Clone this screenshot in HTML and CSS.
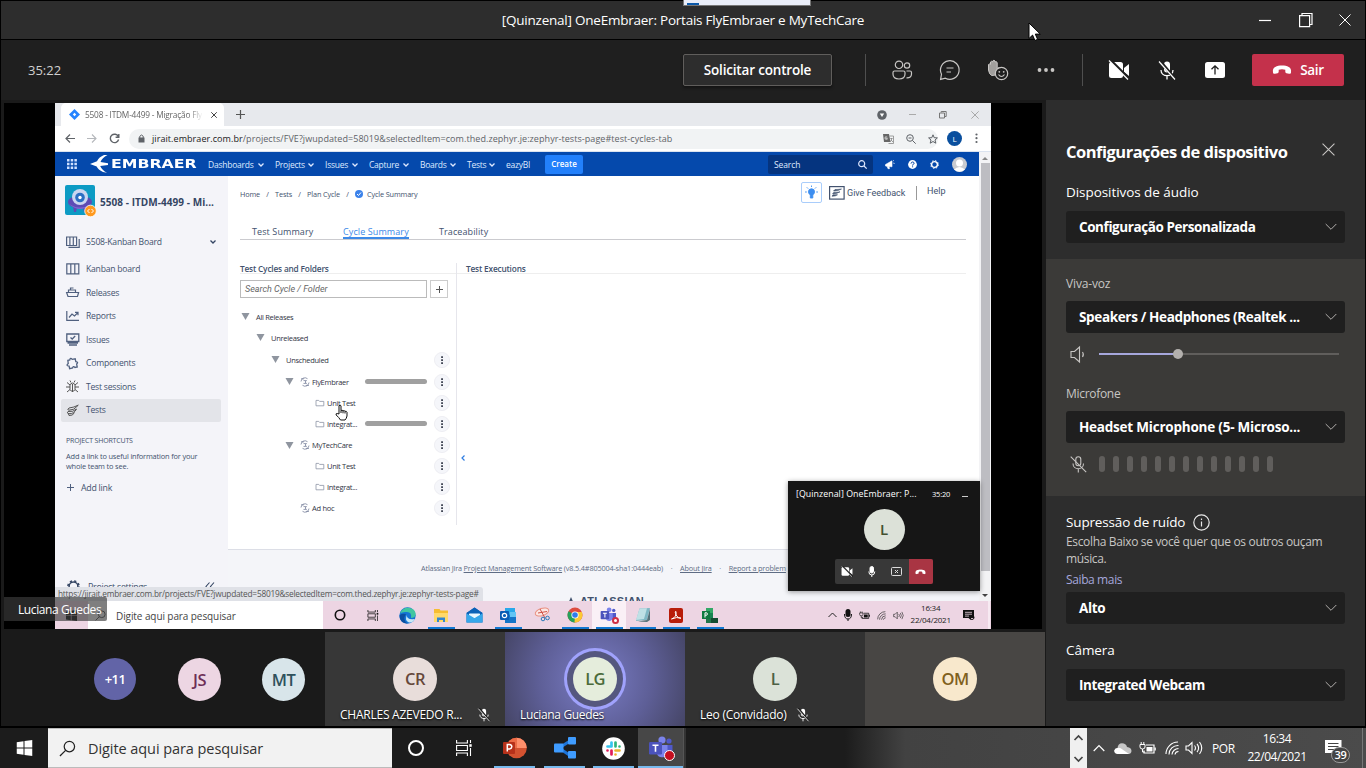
FILE: index.html
```html
<!DOCTYPE html>
<html lang="pt-BR">
<head>
<meta charset="utf-8">
<title>[Quinzenal] OneEmbraer: Portais FlyEmbraer e MyTechCare</title>
<link rel="stylesheet" href="styles.css">
</head>
<body>
<svg class="defs" width="0" height="0">
  <symbol id="chev" viewBox="0 0 12 8"><path d="M.7 1 6 6.3 11.300 1" fill="none" stroke="currentColor" stroke-width="1"/></symbol>
  <symbol id="x" viewBox="0 0 12 12"><path d="M.5.5l11 11M11.500.5l-11 11" fill="none" stroke="currentColor"/></symbol>
  <symbol id="mic-off" viewBox="0 0 20 20"><rect x="7" y="1" width="6" height="11" rx="3" fill="currentColor"/><path d="M4 9.500c0 7.500 12 7.500 12 0M10 15.500V19" fill="none" stroke="currentColor" stroke-width="1.300"/><path d="M3 .5 18.500 19" stroke="#1f1f1f" stroke-width="3"/><path d="M2 1l16 18" stroke="currentColor" stroke-width="1.200"/></symbol>
  <symbol id="hang" viewBox="0 0 20 10"><path d="M1 7.500C0 2 5 .5 10 .5S20 2 19 7.500c-.2 1.300-1 1.500-2 1.300l-2.500-.6c-.9-.2-1.200-.7-1.200-1.600V4.800c-2-.8-4.600-.8-6.600 0v1.800c0 .9-.3 1.400-1.200 1.600L3 8.800c-1 .2-1.800 0-2-1.300z" fill="currentColor"/></symbol>
  <symbol id="cam-off" viewBox="0 0 22 20"><rect x="1" y="2" width="14" height="16" rx="2.500" fill="currentColor"/><path d="M16 8l5-4v12l-5-4z" fill="currentColor"/><path d="M2-.5 21.500 19" stroke="#1f1f1f" stroke-width="2.500"/><path d="M1 .5 20 19.500" stroke="currentColor" stroke-width="1.200"/></symbol>
  <symbol id="tri" viewBox="0 0 8 7"><path d="M0 0h8L4 7z" fill="#8f959f"/></symbol>
  <symbol id="cyc" viewBox="0 0 10 10"><path d="M1 4.500A4 4 0 0 1 7.500 1.700M9 5.500A4 4 0 0 1 2.500 8.300M1 1.800h3M6 8.400h3M3.500 3.600h3L5 5l1.500 1.400h-3" fill="none" stroke="#77809a" stroke-width=".8"/></symbol>
  <symbol id="fold" viewBox="0 0 10 8"><path d="M1 6.800V1.400h2.700l.9 1h4.200v4.400z" fill="none" stroke="#8d94a5" stroke-width=".8"/></symbol>
  <symbol id="dots" viewBox="0 0 16 16"><circle cx="8" cy="8" r="7.600" fill="#f5f6fa" stroke="#e8e8ee" stroke-width=".7"/><path d="M7.200 4.200h1.700v1.700H7.200zM7.200 7.200h1.700v1.700H7.200zM7.200 10.200h1.700v1.700H7.200z" fill="#2f3544"/></symbol>
  <symbol id="lens" viewBox="0 0 18 18"><circle cx="11" cy="7" r="5.500" fill="none" stroke="currentColor" stroke-width="1.300"/><path d="M7 11l-6 6" stroke="currentColor" stroke-width="1.300"/></symbol>
  <symbol id="win" viewBox="0 0 16 16"><path d="M0 2.200 7 1.200v6.300H0zM8 1.100 16 0v7.500H8zM0 8.500h7v6.300l-7-1zM8 8.500h8V16l-8-1.100z" fill="currentColor"/></symbol>
  <symbol id="tview" viewBox="0 0 16 16"><path d="M.6 0v3h10.800V0M.6 16v-3h10.800v3M.6 5.500h10.800v5H.6zM14.500 0v3M14.500 8v8" fill="none" stroke="currentColor" stroke-width="1.100"/><path d="M13.300 4.200h2.400v2.600h-2.400z" fill="currentColor"/></symbol>
  <symbol id="wifi" viewBox="0 0 14 14"><path d="M1 13A12 12 0 0 1 13 1M4 13.500A9 9 0 0 1 13.500 4.500M7 13.500a6.500 6.500 0 0 1 6.500-6M10 13.500a3.500 3.500 0 0 1 3.500-3" fill="none" stroke="currentColor" stroke-width="1.100"/></symbol>
  <symbol id="vol" viewBox="0 0 18 14"><path d="M1 5v4h2.500L7 12.500v-11L3.500 5zM9.500 4.500q2 2.500 0 5M12 2.800q3.200 4.200 0 8.400M14.500 1q4.500 6 0 12" fill="none" stroke="currentColor" stroke-width="1.100"/></symbol>
  <symbol id="bat" viewBox="0 0 17 13"><path d="M7 3h8v8H5V8.500" fill="none" stroke="currentColor" stroke-width="1.200"/><path d="M7.500 5h6v4.500h-6zM15.500 5.500h1.300v3h-1.300z" fill="currentColor"/><path d="M1 2.500h5V5q0 2-2.500 2T1 5zM2.200 2.500V0M4.800 2.500V0M3.500 7v3h2" fill="none" stroke="currentColor"/></symbol>
  <symbol id="teams" viewBox="0 0 26 24"><circle cx="14" cy="4" r="3.600" fill="#7b83eb"/><circle cx="21" cy="5" r="2.600" fill="#5059c9"/><path d="M17 9h7.500v6.500a4 4 0 0 1-7.500 2z" fill="#5059c9"/><path d="M9 9h10.500v7a5.500 5.500 0 0 1-10.500 2z" fill="#7b83eb"/><rect x="1" y="6" width="13" height="12.500" rx="1.200" fill="#4b53bc"/><path d="M4.500 9.200h6M7.500 9.200v6.600" stroke="#fff" stroke-width="1.600"/></symbol>
</svg>

<header class="titlebar">
  <h1 class="title">[Quinzenal] OneEmbraer: Portais FlyEmbraer e MyTechCare</h1>
  <div class="winctl">
    <svg width="14" height="14"><path d="M1 7.500h12" stroke="#fff" stroke-width="1.200"/></svg>
    <svg width="16" height="16" viewBox="0 0 16 16" fill="none" stroke="#fff" stroke-width="1.200"><path d="M1.600 3.600h10v11h-10zM4 3.500v-2h10v11h-2.300"/></svg>
    <svg width="12" height="12" color="#fff"><use href="#x"/></svg>
  </div>
  <div class="peek"><i></i></div>
</header>

<section class="callbar">
  <span class="timer">35:22</span>
  <button class="ask">Solicitar controle</button>
  <i class="rule r1"></i>
  <span class="cell"><svg width="22" height="20" viewBox="0 0 22 20" fill="none" stroke="#c8c6c4" stroke-width="1.200"><circle cx="8" cy="4.800" r="3.700"/><circle cx="16" cy="5.500" r="2.700"/><path d="M3.500 11h9q1.500 0 1.500 1.500v1.500q0 5-6 5t-6-5v-1.500q0-1.500 1.500-1.500zM15.500 11h3.500q1.500 0 1.500 1.500v1.500q0 4-5 3.800"/></svg></span>
  <span class="cell"><svg width="22" height="22" viewBox="0 0 22 22" fill="none" stroke="#c8c6c4" stroke-width="1.200"><path d="M2.500 15.200A9.300 9.300 0 1 1 6.400 19.200L1.600 20.400zM7.500 9h7M7.500 13h4.500"/></svg></span>
  <span class="cell"><svg width="22" height="22" viewBox="0 0 22 22"><path d="M1.500 11V5.500q1.200-1.200 2 0V3q1-1.500 2.200 0V2q1.200-1.500 2.300 0v1q1.200-1 2.200.5v6q1.500-1.500 3 0l-3.500 4.500q-1 3-5 2.500-2.500-1-3.200-5.500z" fill="#a19f9d" stroke="#c8c6c4"/><circle cx="14.500" cy="14.500" r="6.200" fill="#1f1f1f" stroke="#c8c6c4" stroke-width="1.200"/><circle cx="12.300" cy="12.800" r=".9" fill="#c8c6c4"/><circle cx="16.700" cy="12.800" r=".9" fill="#c8c6c4"/><path d="M11.500 15.500q3 4 6 0" fill="none" stroke="#c8c6c4" stroke-width="1.200"/></svg></span>
  <span class="cell"><svg width="20" height="6" fill="#c8c6c4"><circle cx="3.500" cy="3" r="1.900"/><circle cx="10" cy="3" r="1.900"/><circle cx="16.500" cy="3" r="1.900"/></svg></span>
  <i class="rule r2"></i>
  <span class="cell lead"><svg width="22" height="20"><use href="#cam-off"/></svg></span>
  <span class="cell"><svg width="20" height="21"><use href="#mic-off"/></svg></span>
  <span class="cell"><svg width="20" height="16" viewBox="0 0 20 16"><rect width="20" height="16" rx="2.500" fill="#fff"/><path d="M10 12.500V4M6.500 7.300 10 3.800l3.500 3.500" fill="none" stroke="#1f1f1f" stroke-width="1.300"/></svg></span>
  <button class="leave"><svg width="20" height="10"><use href="#hang"/></svg>Sair</button>
</section>
<svg class="pointer" width="14" height="20" viewBox="0 0 14 20"><path d="M1 1v15.500l3.600-3.400 2.300 5.400 2.700-1.200-2.300-5.200h5z" fill="#fff" stroke="#000"/></svg>

<main class="body">
  <div class="left">
    <div class="stage">
      <div class="share">
        <div class="tabs">
          <div class="tab"><svg width="11" height="11" viewBox="0 0 11 11"><path d="M5.500 0 11 5.500 5.500 11 0 5.500z" fill="#2684ff"/><path d="M5.500 3.800 7.200 5.500 5.500 7.200 3.800 5.500z" fill="#fff"/></svg><span>5508 - ITDM-4499 - Migração Fly</span><svg class="tx" width="6" height="6" viewBox="0 0 12 12" color="#444" stroke-width="2"><use href="#x"/></svg></div>
          <svg class="plus" width="9" height="9"><path d="M4.500 0v9M0 4.500h9" stroke="#555" stroke-width="1.200"/></svg>
          <svg class="wc1" width="10" height="10"><circle cx="5" cy="5" r="4.800" fill="#5f6368"/><path d="M2.800 3.500h4.400L5 7z" fill="#fff"/></svg>
          <svg class="wc2" width="8" height="8"><path d="M0 3.500h7" stroke="#aaa"/></svg>
          <svg class="wc3" width="8" height="8" fill="none" stroke="#777"><path d="M.5 2h5v5h-5zM2.200 1.500V.5h5v5H6"/></svg>
          <svg class="wc4" width="8" height="8" color="#888" viewBox="0 0 12 12"><use href="#x"/></svg>
        </div>
        <div class="addr">
          <svg width="10" height="9" fill="none" stroke="#5f6368" stroke-width="1.200"><path d="M10 4.500H1M5 .5l-4 4 4 4"/></svg>
          <svg width="10" height="9" fill="none" stroke="#b4b7bb" stroke-width="1.100"><path d="M0 4.500h9M5 .5l4 4-4 4"/></svg>
          <svg width="11" height="11" fill="none" stroke="#5f6368" stroke-width="1.400"><path d="M9.300 3.500A4.200 4.200 0 1 0 9.600 6.500M9.800 1v3.200H6.600"/></svg>
          <div class="omni"><svg width="7" height="9"><path d="M.5 3.500h6v5h-6z" fill="#5f6368"/><path d="M1.800 4V2.200q1.700-2.400 3.400 0V4" fill="none" stroke="#5f6368"/></svg><span><b>jirait.embraer.com.br</b>/projects/FVE?jwupdated=58019&amp;selectedItem=com.thed.zephyr.je:zephyr-tests-page#test-cycles-tab</span>
            <svg class="tr" width="11" height="10"><path d="M0 0h6l1.500 8H1z" fill="#666"/><path d="M6.500 2H10.500v7.500H5.500M7.200 4.500h2.500M8.500 4v2L7 8M8 6l2 2" fill="none" stroke="#888" stroke-width=".8"/><path d="M4.300 3.200Q2 2 1.900 4T4.500 4.800H3.300" stroke="#fff" fill="none" stroke-width=".7"/></svg>
            <svg width="10" height="10" fill="none" stroke="#5f6368"><circle cx="4" cy="4" r="3.300"/><path d="M6.500 6.500 9.700 9.700M2.500 4h3"/></svg>
            <svg width="10" height="10" viewBox="0 0 10 10" fill="none" stroke="#5f6368"><path d="M5 .8 6.200 3.700l3.200.2L7 6l.8 3.200L5 7.500 2.200 9.200 3 6 .6 3.900l3.200-.2z"/></svg>
          </div>
          <span class="me">L</span>
          <svg class="kb" width="3" height="11" fill="#5f6368"><circle cx="1.500" cy="1.500" r="1.100"/><circle cx="1.500" cy="5.200" r="1.100"/><circle cx="1.500" cy="9" r="1.100"/></svg>
        </div>
        <div class="page">
          <div class="jira">
            <nav class="jnav">
              <svg class="grid" width="10" height="10" fill="#cfe0ff"><path d="M0 0h2.500v2.500H0zM3.700 0h2.500v2.500H3.700zM7.400 0h2.500v2.500H7.400zM0 3.700h2.500v2.500H0zM3.700 3.700h2.500v2.500H3.700zM7.400 3.700h2.500v2.500H7.400zM0 7.400h2.500v2.500H0zM3.700 7.400h2.500v2.500H3.700zM7.400 7.400h2.500v2.500H7.400z"/></svg>
              <svg class="bird" width="18" height="18" viewBox="0 0 18 18"><path d="M0 9 7 6.200Q9 2 14 0L17.500 0Q12 3 10.500 7L18 8.200v1.900l-7.800.8Q12 15 17 17.800L13 17Q8 15 6.700 11.600z" fill="#fff"/></svg>
              <span class="brand">EMBRAER</span>
              <span class="mi m1">Dashboards</span><svg class="dn" width="6" height="4"><use href="#dnp"/></svg>
              <span class="mi m2">Projects</span><svg class="dn" width="6" height="4"><use href="#dnp"/></svg>
              <span class="mi m3">Issues</span><svg class="dn" width="6" height="4"><use href="#dnp"/></svg>
              <span class="mi m4">Capture</span><svg class="dn" width="6" height="4"><use href="#dnp"/></svg>
              <span class="mi m5">Boards</span><svg class="dn" width="6" height="4"><use href="#dnp"/></svg>
              <span class="mi m6">Tests</span><svg class="dn" width="6" height="4"><path id="dnp" d="M.5.5 3 3 5.500.5" fill="none" stroke="currentColor" stroke-width="1.300"/></svg>
              <span class="mi m7">eazyBI</span>
              <span class="create">Create</span>
              <span class="jsearch">Search<svg width="9" height="9" fill="none" stroke="#dfe8ff" stroke-width="1.200"><circle cx="3.700" cy="3.700" r="3"/><path d="M6 6l2.700 2.700"/></svg></span>
              <svg class="horn" width="10" height="9"><path d="M.5 4.500 7 .8v6L.5 6zM2 6l1 2.700h1.500L4 6.200M8 1l1-.8M8 3l1.800.5" fill="#fff" stroke="#fff" stroke-width=".6"/></svg>
              <svg class="help" width="9" height="9"><circle cx="4.500" cy="4.500" r="4.400" fill="#fff"/><path d="M3 3.600Q3.200 2 4.600 2t1.500 1.300Q6 4.200 4.600 4.800v.7M4.600 6.300v1" stroke="#0747a6" fill="none"/></svg>
              <svg class="gear" width="9" height="9"><circle cx="4.500" cy="4.500" r="2.900" fill="none" stroke="#fff" stroke-width="1.400"/><circle cx="4.500" cy="4.500" r="3.900" fill="none" stroke="#fff" stroke-width="1" stroke-dasharray="1.500 1.560"/></svg>
              <svg class="ava" width="15" height="15"><circle cx="7.500" cy="7.500" r="7.500" fill="#c9cbd0"/><circle cx="7.500" cy="6" r="3.500" fill="#fff"/><path d="M2 12.500q5.500-5 11 0-5.500 4.500-11 0z" fill="#fff"/></svg>
            </nav>
            <div class="jbody">
              <aside class="side">
                <div class="proj"><svg width="32" height="33" viewBox="0 0 32 33"><rect width="30" height="30" rx="2" fill="#0d9bc4"/><ellipse cx="15" cy="17" rx="12" ry="6.500" fill="#5d4bb5"/><path d="M8 21l1 6h2l1-4h6l1 4h2l1-6z" fill="#5d4bb5"/><circle cx="15" cy="12" r="8" fill="#cbd6f0"/><circle cx="15" cy="12.500" r="4.800" fill="#2c6fc4"/><circle cx="15" cy="12.500" r="1.700" fill="#fff"/><path d="M4 19q11 7 22 0-11 10-22 0z" fill="#7f63d2"/><circle cx="25.500" cy="26" r="5.800" fill="#ff991f" stroke="#fff" stroke-width=".8"/><path d="M24.500 24l-2 2 2 2M26.500 24l2 2-2 2" fill="none" stroke="#fff"/></svg><b>5508 - ITDM-4499 - Mi...</b></div>
                <ul class="menu">
                  <li class="k"><svg width="14" height="12" fill="none" stroke="#50607f" stroke-width="1.200"><path d="M.6 1h10v8.500H.6zM3.900 1v8.500M7.300 1v8.500M2.500 11.400h10.700V3"/></svg><span>5508-Kanban Board</span><svg class="kd" width="6" height="4" color="#344563"><use href="#dnp"/></svg></li>
                  <li><svg width="14" height="12" fill="none" stroke="#50607f" stroke-width="1.200"><path d="M.8.800h12v10H.8zM4.800.800v10M8.800.800v10"/></svg><span>Kanban board</span></li>
                  <li><svg width="14" height="11" fill="none" stroke="#50607f" stroke-width="1.200"><path d="M.6 5.500h12L11.500 9.500H2zM2.500 5V3h7v2M4.500 3V1h3"/></svg><span>Releases</span></li>
                  <li><svg width="14" height="11" fill="none" stroke="#50607f" stroke-width="1.200"><path d="M.8 0v9.400H13M3 6.500 6 3l2.500 2L12 1.500M9 1.300h3v3"/></svg><span>Reports</span></li>
                  <li><svg width="14" height="13" fill="none" stroke="#50607f" stroke-width="1.300"><path d="M.8 1h12v7.500H.8zM1.500 10h10.500M3 12h8M4.500 4.500 6.200 6l3-3"/></svg><span>Issues</span></li>
                  <li><svg width="14" height="13" fill="none" stroke="#50607f" stroke-width="1.300"><path d="M2.500 2.500h2q1-2.500 2.500 0h3v3q3 1 .3 2.500v3H8q-1.300-2.300-2.500 0H2.500V8.500q-3.500-1-.3-2.700z" transform="rotate(-12 6 6)"/></svg><span>Components</span></li>
                  <li><svg class="bug" width="14" height="13" fill="none" stroke="#555" stroke-width="1"><path d="M4 4.500q2.500-3 5 0v5q-2.500 4-5 0zM6.500 4v8M4 5 1 2.500M9 5l3-2.500M4 7H0M9 7h4M4 9.500 1 12M9 9.500 12 12M5 2.500 4 .5M8 2.500 9 .5"/></svg><span>Test sessions</span></li>
                  <li class="on"><svg width="14" height="13" fill="none" stroke="#555" stroke-width="1"><path d="M12.500 1Q8 3.500 3 4 .5 6 3 6.200 8 6.500 12 1.500M10.500 5Q7 8.300 2 7.500q-2 1.700 1 2.200Q8 10 10.500 5M8.500 8.500Q7 12 3 11.500L2.500 10"/></svg><span>Tests</span></li>
                </ul>
                <p class="cap">PROJECT SHORTCUTS</p>
                <p class="hint">Add a link to useful information for your<br>whole team to see.</p>
                <p class="add"><svg width="7" height="7"><path d="M3.500 0v7M0 3.500h7" stroke="#50607f"/></svg>Add link</p>
                <p class="pset"><svg width="13" height="13"><circle cx="6.500" cy="6.500" r="4.400" fill="none" stroke="#344563" stroke-width="1.500"/><circle cx="6.500" cy="6.500" r="5.600" fill="none" stroke="#344563" stroke-width="1.500" stroke-dasharray="2.200 2.200"/></svg><span>Project settings</span><svg class="coll" width="10" height="9" fill="none" stroke="#344563" stroke-width="1.100"><path d="M4.500.5 1 4.500l3.500 4M9 .5 5.500 4.500 9 8.500"/></svg></p>
              </aside>
              <div class="content">
                <div class="sheet">
                  <div class="crumb"><div class="trail"><span>Home</span><i>/</i><span>Tests</span><i>/</i><span>Plan Cycle</span><i>/</i><svg width="8" height="8"><circle cx="4" cy="4" r="4" fill="#3b82ea"/><path d="M2 4l1.500 1.500 2.500-3" fill="none" stroke="#fff"/></svg><span>Cycle Summary</span></div>
                    <div class="ctools"><span class="bulb"><svg width="15" height="15" fill="#3d8ef0" stroke="#3d8ef0"><circle cx="7.500" cy="6.800" r="3" /><path d="M6.300 9h2.500v4H6.300zM7.500.5v1.500M1 7h1.800M12.200 7H14M2.800 2.300l1.300 1.300M12.200 2.300l-1.300 1.300" stroke-width=".9"/></svg></span><svg class="fbi" width="16" height="14"><rect x=".6" y=".6" width="14.500" height="12.500" fill="none" stroke="#42526e" stroke-width="1.200"/><path d="M12.500 3Q9 3.500 6 3.500L4.500 5q4 .3 8-2zM11 5.800Q8 6.800 5 6.300L3.500 7.700q4.500.3 7.500-1.900zM8.500 8.800 4 8.800 3 10.200q3.500.2 5.500-1.400z" fill="#42526e" stroke="#42526e" stroke-width=".6"/></svg><span class="gf">Give Feedback</span><i class="bar"></i><span class="hp">Help</span></div>
                  </div>
                  <div class="jt"><span class="t1">Test Summary</span><span class="t2">Cycle Summary</span><span class="t3">Traceability</span></div>
                  <div class="cols">
                    <div class="tree">
                      <h2>Test Cycles and Folders</h2>
                      <div class="find"><span class="inp">Search Cycle / Folder</span><span class="pl"><svg width="7" height="7"><path d="M3.500 0v7M0 3.500h7" stroke="#555"/></svg></span></div>
                      <div class="row r-a"><svg width="9" height="7"><use href="#tri"/></svg><span>All Releases</span></div>
                      <div class="row r-b"><svg width="9" height="7"><use href="#tri"/></svg><span>Unreleased</span></div>
                      <div class="row r-c"><svg width="9" height="7"><use href="#tri"/></svg><span>Unscheduled</span><svg class="dd" width="16" height="16"><use href="#dots"/></svg></div>
                      <div class="row r-d"><svg width="9" height="7"><use href="#tri"/></svg><svg class="cy" width="10" height="10"><use href="#cyc"/></svg><span>FlyEmbraer</span><i class="pb"></i><svg class="dd" width="16" height="16"><use href="#dots"/></svg></div>
                      <div class="row r-e"><svg width="10" height="8"><use href="#fold"/></svg><span>Unit Test</span><svg class="dd" width="16" height="16"><use href="#dots"/></svg></div>
                      <div class="row r-e"><svg width="10" height="8"><use href="#fold"/></svg><span>Integrat...</span><i class="pb"></i><svg class="dd" width="16" height="16"><use href="#dots"/></svg></div>
                      <div class="row r-d"><svg width="9" height="7"><use href="#tri"/></svg><svg class="cy" width="10" height="10"><use href="#cyc"/></svg><span>MyTechCare</span><svg class="dd" width="16" height="16"><use href="#dots"/></svg></div>
                      <div class="row r-e"><svg width="10" height="8"><use href="#fold"/></svg><span>Unit Test</span><svg class="dd" width="16" height="16"><use href="#dots"/></svg></div>
                      <div class="row r-e"><svg width="10" height="8"><use href="#fold"/></svg><span>Integrat...</span><svg class="dd" width="16" height="16"><use href="#dots"/></svg></div>
                      <div class="row r-f"><svg width="10" height="10"><use href="#cyc"/></svg><span>Ad hoc</span><svg class="dd" width="16" height="16"><use href="#dots"/></svg></div>
                    </div>
                    <div class="exec"><h2>Test Executions</h2><svg width="4" height="6"><path d="M3.500.5 1 3l2.500 2.500" fill="none" stroke="#2f7de1" stroke-width="1.200"/></svg></div>
                  </div>
                </div>
                <footer class="foot"><p><span class="f1">Atlassian Jira <u>Project Management Software</u> (v8.5.4#805004-sha1:0444eab)</span><i>·</i><u class="f2">About Jira</u><i>·</i><u class="f3">Report a problem</u></p><div class="atl"><svg width="8" height="9"><path d="M4 0 8 9H5L3.500 5 1.500 9H0z" fill="#42526e"/></svg>ATLASSIAN</div></footer>
              </div>
            </div>
            <div class="status">https://jirait.embraer.com.br/projects/FVE?jwupdated=58019&amp;selectedItem=com.thed.zephyr.je:zephyr-tests-page#</div>
          </div>
          <div class="scroll"><svg width="7" height="4"><path d="M0 4h6L3 1z" fill="#888"/></svg><i></i><svg width="7" height="4"><path d="M0 0h6L3 3z" fill="#444"/></svg></div>
        </div>
        <div class="mtask">
          <span class="mstart"><svg width="11" height="11" color="#111"><use href="#win"/></svg></span>
          <div class="msearch"><svg width="11" height="11" color="#222"><use href="#lens"/></svg><span>Digite aqui para pesquisar</span></div>
          <div class="mi-c"><svg width="12" height="12"><circle cx="6" cy="6" r="4.700" fill="none" stroke="#111" stroke-width="1.600"/></svg></div>
          <div class="mi-c"><svg width="12" height="11" color="#111"><use href="#tview"/></svg></div>
          <div class="mi-c"><svg width="17" height="17"><circle cx="8.500" cy="8.500" r="8.200" fill="#1474d4"/><path d="M1 6.500Q4-.5 11 1q6 1.500 5.500 7-.5 3-4.500 3 1-6-4-6Q3 4.500 1 6.500z" fill="#41c6a0"/><path d="M7 7Q3 13 8.500 16.500 2 17 .6 10 .5 6 7 7z" fill="#0b4fa0"/><path d="M8 8q-1 5 8 4-3 5-7 3-3.500-2-1-7z" fill="#c8e8f6"/></svg></div>
          <div class="mi-c u"><svg width="16" height="15"><path d="M1 1h5.500l1 1.500H15V14H1z" fill="#f6bd31"/><path d="M1 5h14v9H1z" fill="#ffd96b"/><path d="M4 14V9.500h8V14H10v-2H6v2z" fill="#3285cf"/></svg></div>
          <div class="mi-c"><svg width="17" height="16"><path d="M.5 6 8.500.5l8 5.500v9.500H.5z" fill="#0b62b8"/><path d="M3 4.500h11V9l-5.500 3.500L3 9z" fill="#e8f6ff"/><path d="M.5 6.500 8.500 11l8-4.500v9H.5z" fill="#36a7ea"/><path d="M.5 6 8.500.5l8 5.500-2 1h-12z" fill="#0b62b8"/><path d="M3 6.500h11L8.500 11z" fill="#e8f6ff"/></svg></div>
          <div class="mi-c u"><svg width="17" height="15"><path d="M5 0h10v13H5z" fill="#28a8ea"/><path d="M5 7 16 6v9H5z" fill="#1274c8"/><path d="M10 4h6v5h-6z" fill="#62c5f5"/><rect y="3" width="9" height="9" rx="1" fill="#0a5cb5"/><circle cx="4.500" cy="7.500" r="2.200" fill="none" stroke="#fff" stroke-width="1.200"/></svg></div>
          <div class="mi-c"><svg width="16" height="16" fill="none"><ellipse cx="8" cy="5" rx="7" ry="3.600" stroke="#e99181" transform="rotate(-18 8 5)" fill="#fbe7e5"/><path d="M4 6 13 4.500M6 2l5 9" stroke="#cf5146"/><circle cx="9" cy="12" r="1.800" stroke="#2979b9"/><circle cx="13.500" cy="11" r="1.800" stroke="#2979b9"/></svg></div>
          <div class="mi-c u"><svg width="16" height="16"><circle cx="8" cy="8" r="7.500" fill="#dd4b3e"/><path d="M8 8 1.500 4.300A7.500 7.500 0 0 0 8 15.500z" fill="#25a15b"/><path d="M8 8 7.500 15.500A7.500 7.500 0 0 0 14.800 5H8z" fill="#fcc934"/><circle cx="8" cy="8" r="3.600" fill="#fff"/><circle cx="8" cy="8" r="2.800" fill="#2f7ceb"/></svg></div>
          <div class="mi-c u act"><svg width="17" height="16"><use href="#teams"/></svg><i class="dnd"></i></div>
          <div class="mi-c u"><svg width="16" height="16"><path d="M4.500 1.500 15 1 12 13 1 14z" fill="#7fb7c4"/><path d="M4.500 1.500 12 1.200 9 12 1 13z" fill="#bfe0e6"/><path d="M15 2v11l-3 2-9-.5 9-1.500z" fill="#56727a"/></svg></div>
          <div class="mi-c u"><svg width="14" height="15"><rect width="14" height="15" rx="2" fill="#b81c09"/><path d="M2.500 11Q8 9 7 3.500 5.500 3 7 7q2 3.500 5 3.200Q8 8.500 2.500 11z" fill="none" stroke="#fff" stroke-width="1"/></svg></div>
          <div class="mi-c u"><svg width="16" height="15"><path d="M4 0h7v5H4z" fill="#33a867"/><path d="M4 5h7v5H4z" fill="#178451"/><path d="M8 10h8v5H8z" fill="#134c32"/><path d="M4 10h5v5H4z" fill="#22764c"/><rect y="3" width="8" height="8" fill="#107a41"/><path d="M3 9.500V4.800h1.800q1.300 1.200 0 2.400H3" fill="none" stroke="#fff"/></svg></div>
          <div class="mtray"><svg width="9" height="6"><path d="M.5 5 4.500 1l4 4" fill="none" stroke="#222"/></svg><svg width="8" height="12"><rect x="1.500" width="5" height="8" rx="2.500" fill="#111"/><path d="M.5 5q0 5 3.500 5t3.500-5M4 10v2" fill="none" stroke="#111"/></svg><svg width="11" height="9" viewBox="0 0 17 13" color="#111"><use href="#bat"/></svg><svg width="9" height="9" viewBox="0 0 14 14" color="#333"><use href="#wifi"/></svg><svg width="11" height="9" viewBox="0 0 18 14" color="#333"><use href="#vol"/></svg></div>
          <div class="mclock">16:34<br>22/04/2021</div>
          <svg class="mnote" width="12" height="12"><path d="M0 1h11v8H8v2L5.500 9H0z" fill="#111"/><path d="M2 3.300h7M2 5.200h7M2 7.100h4" stroke="#eed5e3" stroke-width=".8"/><circle cx="9" cy="8.500" r="2" fill="none" stroke="#111"/></svg>
          <i class="mline"></i>
        </div>
        <div class="pip">
          <div class="ptop"><span>[Quinzenal] OneEmbraer: P...</span><b>35:20</b><i></i></div>
          <div class="pava">L</div>
          <div class="pbar"><div><svg width="12" height="11" viewBox="0 0 22 20"><use href="#cam-off"/></svg></div><div><svg width="8" height="12" fill="none" stroke="#fff"><rect x="2" y=".5" width="3.500" height="6.500" rx="1.700" fill="#fff"/><path d="M.8 5.500q0 3.500 3 3.500t3-3.500M3.800 9v2"/></svg></div><div><svg width="11" height="9" fill="none" stroke="#ddd"><rect x=".5" y=".5" width="10" height="8" rx="1"/><path d="M4 3l3 3M7 3 4 6"/></svg></div><div class="end"><svg width="11" height="6" viewBox="0 0 20 10"><use href="#hang"/></svg></div></div>
        </div>
        <svg class="hand" width="13" height="17" viewBox="0 0 13 17"><path d="M4 10V1.800q1.200-1.500 2 0V6.500q1.200-.8 2 .3 1.300-.6 2 .5 1.500-.4 2 .9V12q-.5 2.500-2 4H5.500Q4 13.500 1.200 11q-.8-1.500 1-1.500z" fill="#fff" stroke="#111"/><path d="M6 6.500V9M8 7v2.300M10 7.500v2" stroke="#111"/></svg>
      </div>
      <span class="who">Luciana Guedes</span>
    </div>
    <div class="strip">
      <div class="more"><span class="av a1">+11</span><span class="av a2">JS</span><span class="av a3">MT</span></div>
      <div class="tile t-cr"><span class="av">CR</span><p><span>CHARLES AZEVEDO R...</span><svg width="14" height="14" viewBox="0 0 20 20"><use href="#mic-off"/></svg></p></div>
      <div class="tile t-lg"><span class="av">LG</span><p><span>Luciana Guedes</span></p></div>
      <div class="tile t-l"><span class="av">L</span><p><span>Leo (Convidado)</span><svg width="14" height="14" viewBox="0 0 20 20"><use href="#mic-off"/></svg></p></div>
      <div class="tile t-om"><span class="av">OM</span></div>
    </div>
  </div>

  <aside class="panel">
    <div class="ph"><h2>Configurações de dispositivo</h2><svg width="13" height="13" viewBox="0 0 12 12" color="#c8c6c4"><use href="#x"/></svg></div>
    <label class="lb aud">Dispositivos de áudio</label>
    <div class="sel"><span class="s1">Configuração Personalizada</span><svg width="12" height="8"><use href="#chev"/></svg></div>
    <div class="zone">
      <label class="sm">Viva-voz</label>
      <div class="sel"><span class="s2">Speakers / Headphones (Realtek ...</span><svg width="12" height="8"><use href="#chev"/></svg></div>
      <div class="slide"><svg width="16" height="17" fill="none" stroke="#c8c6c4" stroke-width="1.100"><path d="M1 5.500v6h3.500L9.500 16V1L4.500 5.500zM12.500 6q1.700 2.500 0 5"/></svg><div class="track"><i></i><b></b></div></div>
      <label class="sm mf">Microfone</label>
      <div class="sel"><span class="s3">Headset Microphone (5- Microso...</span><svg width="12" height="8"><use href="#chev"/></svg></div>
      <div class="meter"><svg width="17" height="17" viewBox="0 0 17 17" fill="none" stroke="#c8c6c4" stroke-width="1.100"><rect x="5.800" y=".8" width="5" height="9" rx="2.500"/><path d="M3 7.500c0 7 10.500 7 10.500 0M8.300 13v3.500M.7.700l15.500 15.500"/></svg><div class="pills"><i></i><i></i><i></i><i></i><i></i><i></i><i></i><i></i><i></i><i></i><i></i><i></i><i></i></div></div>
    </div>
    <div class="lb noise"><span>Supressão de ruído</span><svg width="17" height="17" fill="none" stroke="#e8e8e8" stroke-width="1.200"><circle cx="8.500" cy="8.500" r="7.700"/><path d="M8.500 7.500v5M8.500 4.500V6"/></svg></div>
    <p class="desc">Escolha Baixo se você quer que os outros ouçam<br>música.</p>
    <a class="more-l">Saiba mais</a>
    <div class="sel"><span class="s4">Alto</span><svg width="12" height="8"><use href="#chev"/></svg></div>
    <label class="lb camr">Câmera</label>
    <div class="sel"><span class="s5">Integrated Webcam</span><svg width="12" height="8"><use href="#chev"/></svg></div>
  </aside>
</main>

<footer class="taskbar">
  <div class="start"><svg width="17" height="16" viewBox="0 0 16 16" color="#fff"><use href="#win"/></svg></div>
  <div class="search"><svg width="17" height="17" color="#222"><use href="#lens"/></svg><span>Digite aqui para pesquisar</span></div>
  <div class="app w48"><svg width="18" height="18"><circle cx="9" cy="9" r="7" fill="none" stroke="#fff" stroke-width="2"/></svg></div>
  <div class="app w48"><svg width="16" height="16" color="#fff"><use href="#tview"/></svg></div>
  <div class="app pp"><svg width="24" height="22"><circle cx="13.500" cy="11" r="10.300" fill="#d35230"/><path d="M13.500.7A10.300 10.300 0 0 1 23.800 11H13.500z" fill="#ff8f6b"/><path d="M3.500 11A10 10 0 0 1 13.500.7V11z" fill="#ed6c47"/><rect y="5" width="12" height="12" rx="1" fill="#b7311a"/><path d="M4.300 14.500v-7h2.200q2.400.3 2.300 2.200T6.500 12H4.300" fill="none" stroke="#fff" stroke-width="1.500"/></svg></div>
  <div class="app"><svg width="22" height="22"><path d="M5 11 16 4M5 11l11 7.500" stroke="#1d74d8" stroke-width="3"/><rect y="6.500" width="9.500" height="9" rx="1" fill="#3f9cff"/><rect x="14" width="8" height="7.500" rx="1" fill="#3f9cff"/><rect x="14" y="14" width="8" height="7.500" rx="1" fill="#3f9cff"/></svg></div>
  <div class="app"><svg width="23" height="23"><circle cx="11.500" cy="11.500" r="11.300" fill="#fff"/><g fill="none" stroke-width="2.700" stroke-linecap="round"><path d="M9.500 5.500v4M5.500 9.500h4" stroke="#36c5f0"/><path d="M13.500 5.500v4M17.500 9.500h0" stroke="#2eb67d"/><path d="M13.500 13.500h4M13.500 17.500h0" stroke="#ecb22e"/><path d="M9.500 13.500v4M5.500 13.500h0" stroke="#e01e5a"/></g></svg></div>
  <div class="app tm"><svg width="26" height="24"><use href="#teams"/></svg><i class="rec"></i></div>
  <i class="tsep"></i>
  <div class="spin"><svg width="9" height="6"><path d="M.5 5 4.500 1l4 4" fill="none" stroke="#444" stroke-width="1.700"/></svg><svg width="9" height="6"><path d="M.5 1l4 4 4-4" fill="none" stroke="#444" stroke-width="1.700"/></svg></div>
  <div class="tray">
    <svg class="ty1" width="12" height="8"><path d="M.7 7 6 1.500 11.300 7" fill="none" stroke="#fff" stroke-width="1.200"/></svg>
    <svg class="ty2" width="18" height="11"><path d="M3.500 11Q0 10.500.3 7.500.8 5 3.500 5 4 .5 8 .3q4 0 5 3.700 4.500.5 4.500 4-.3 3-3 3z" fill="#c6c6c6"/><path d="M3.500 11Q.5 10.500.3 7.500.8 5 3.500 5 6 4 8.500 6.500L15 11z" fill="#fff"/></svg>
    <svg class="ty3" width="17" height="13"><use href="#bat"/></svg>
    <svg class="ty4" width="14" height="14"><use href="#wifi"/></svg>
    <svg class="ty5" width="18" height="14"><use href="#vol"/></svg>
    <span class="por">POR</span>
    <span class="clock">16:34<br>22/04/2021</span>
    <span class="note"><svg width="17" height="17"><path d="M0 0h16.500v13H10l-3 4v-4H0z" fill="#fff"/><path d="M3 3.500h10.500M3 6.500h10.500M3 9.500h6" stroke="#444" stroke-width="1.200"/></svg><b>39</b></span>
    <i class="desk"></i>
  </div>
</footer>
</body>
</html>
```

FILE: styles.css
```css
* { box-sizing: border-box; }
body { margin: 0; width: 1366px; height: 768px; overflow: hidden; background: #000; position: relative; font-family: "Open Sans", "Noto Sans", sans-serif; font-size: 13px; color: #fff; }
h1, h2, p, ul { margin: 0; padding: 0; font-weight: 400; }
ul { list-style: none; }
svg { display: block; flex: none; overflow: visible; }
i { font-style: normal; }
span, b, label { white-space: nowrap; }
button { font-family: inherit; color: #fff; padding: 0; }
.defs { position: absolute; }

/* window title */
.titlebar { height: 40px; border: 1px solid #000; background: #2d2d2d; display: flex; align-items: center; justify-content: center; position: relative; }
.title { font-size: 13.500px; letter-spacing: -.23px; }
.winctl { position: absolute; right: 14px; top: 0; height: 38px; display: flex; align-items: center; width: 93px; justify-content: space-between; }
.peek { position: absolute; left: 682px; top: -1px; width: 128px; height: 6px; background: #e9edf8; border: solid #777; border-width: 0 1px 1px; }
.peek i { display: block; width: 12px; height: 2px; margin: 3px 0 0 3px; background: #0b58a8; }
.pointer { position: absolute; left: 1028px; top: 22px; z-index: 5; }

/* call controls */
.callbar { height: 60px; margin: 0 1px; background: #1f1f1f; display: flex; align-items: center; }
.timer { width: 654px; padding-left: 27px; font-size: 13px; letter-spacing: 0; color: #d0d0d0; margin-right: 28px; }
.ask { width: 149px; height: 32px; background: #2d2d2d; border: 1px solid #605e5c; border-radius: 2px; font-size: 13.500px; font-weight: 600; letter-spacing: -.18px; box-shadow: 0 2px 3px #0006; }
.rule { width: 1px; height: 32px; background: #4f4f4f; }
.r1 { margin: 0 12px 0 33px; }
.r2 { margin: 0 12px; }
.cell { width: 48px; display: grid; place-items: center; }
.leave { margin-left: 13px; width: 92px; height: 32px; background: #c4314b; border: 0; border-radius: 2px; display: flex; align-items: center; justify-content: center; gap: 8px; font-size: 13.500px; font-weight: 600; letter-spacing: -.3px; }

.body { height: 626px; margin: 0 1px; display: flex; background: #1a1a1a; }
.left { width: 1044px; }
.stage { height: 526px; margin: 3px 3px 0; width: 1038px; background: #000; padding-left: 51px; position: relative; }
.share { width: 936px; height: 526px; background: #f4f5f9; color: #42526e; position: relative; overflow: hidden; }
.who { position: absolute; left: 0; top: 494px; width: 103px; height: 24px; padding-left: 14px; line-height: 25px; background: #3c3c3ca8; border-radius: 0 2px 2px 0; font-size: 12px; letter-spacing: -.4px; }

/* browser chrome */
.tabs { height: 23px; background: #e7e9ed; display: flex; align-items: center; }
.tab { width: 163px; height: 23px; margin-left: 6px; background: #fff; border-radius: 5px 5px 0 0; display: flex; align-items: center; padding-left: 8px; font-size: 8.300px; color: #666; }
.tab span { width: 118px; margin-left: 5px; overflow: hidden; letter-spacing: -.2px; -webkit-mask-image: linear-gradient(90deg, #000 88%, transparent); }
.tx { margin-left: 8px; }
.plus { margin-left: 12px; }
.wc1 { margin-left: 632px; }
.wc2 { margin-left: 22px; }
.wc3 { margin-left: 22px; }
.wc4 { margin-left: 24px; }
.addr { height: 25px; background: #fff; display: flex; align-items: center; gap: 12px; padding-left: 10px; }
.omni { width: 809px; height: 20px; margin-left: -3px; border-radius: 10px; background: #f1f3f4; display: flex; align-items: center; gap: 12px; padding-left: 9px; font-size: 9px; color: #5f6368; }
.omni span { width: 721px; margin-left: -5px; letter-spacing: .065px; }
.omni b { font-weight: 400; color: #222; }
.me { width: 15px; height: 15px; border-radius: 50%; background: #0a4f9e; color: #fff; font-size: 8px; line-height: 15px; text-align: center; margin-left: -3px; }
.kb { margin-left: 1px; }

/* jira */
.page { height: 450px; display: flex; border-top: 1px solid #dbe3ef; }
.jira { width: 924px; position: relative; overflow: hidden; }
.jnav { height: 24px; background: #0549ac; display: flex; align-items: center; color: #dfe9ff; font-size: 8.500px; }
.grid { margin-left: 12px; }
.bird { margin-left: 13px; }
.brand { width: 85px; margin: 0 12px 0 3px; font: 700 11.500px "DejaVu Sans", sans-serif; color: #fff; transform: scaleX(1.370); transform-origin: 0 50%; }
.dn { margin: 1px 11px 0 5px; }
.m1 { width: 45px; } .m2 { width: 28px; } .m3 { width: 22px; } .m4 { width: 29px; } .m5 { width: 25px; } .m6 { width: 17px; } .m7 { width: 26px; }
.mi { letter-spacing: -.24px; }
.create { width: 38px; height: 19px; margin-left: 13px; background: #2280fb; border-radius: 2px; text-align: center; line-height: 18px; color: #fff; font-weight: 600; font-size: 8px; }
.jsearch { width: 105px; height: 19px; margin-left: 185px; padding: 0 6px; background: #05347f; border-radius: 2px; display: flex; align-items: center; justify-content: space-between; font-size: 8.500px; letter-spacing: -.1px; }
.horn { margin-left: 12px; } .help { margin-left: 13px; } .gear { margin-left: 13px; } .ava { margin-left: 13px; }
.jbody { display: flex; height: 425px; }
.side { width: 173px; background: #f4f4f9; overflow: hidden; }
.proj { height: 55px; display: flex; align-items: center; padding: 0 0 4px 10px; gap: 3px; font-size: 10px; color: #344563; }
.proj b { letter-spacing: .05px; font-weight: 700; }
.menu li { height: 23.500px; display: flex; align-items: center; margin: 0 7px 0 6px; padding-left: 5px; border-radius: 2px; font-size: 8.600px; letter-spacing: -.22px; color: #42526e; }
.menu li span { margin-left: 6px; }
.menu .k { height: 27px; margin-top: -3px; margin-bottom: 2.500px; }
.kd { margin-left: auto; margin-right: 5px; }
.menu .on { background: #e3e4e9; }
.cap { margin: 14px 0 0 11px; font-size: 7px; line-height: 10px; letter-spacing: -.17px; }
.hint { margin: 5px 0 0 11px; font-size: 7.400px; line-height: 10.300px; letter-spacing: -.16px; white-space: nowrap; }
.add { margin: 9px 0 0 12px; height: 14px; display: flex; align-items: center; gap: 7px; font-size: 8.800px; letter-spacing: -.25px; }
.pset { margin: 85px 0 0 12px; height: 14px; display: flex; align-items: center; font-size: 8.800px; letter-spacing: -.25px; gap: 8px; }
.coll { margin-left: 50px; }
.content { width: 751px; }
.sheet { height: 374px; background: #fff; padding: 0 13px 0 12px; border-bottom: 1px solid #dcdee6; }
.crumb { height: 36px; display: flex; align-items: center; font-size: 7.300px; position: relative; }
.trail { display: flex; align-items: center; letter-spacing: -.14px; }
.trail i { width: 15px; text-align: center; }
.trail svg { margin-right: 4px; }
.ctools { position: absolute; left: 561px; top: 6px; display: flex; height: 21px; align-items: center; }
.bulb { width: 21px; height: 21px; border: 1px solid #a9cdfb; border-radius: 2px; padding: 2px; }
.fbi { margin-left: 7px; }
.gf { margin-left: 2px; font: 9px Roboto, sans-serif; width: 59px; }
.bar { width: 1px; height: 14px; margin: 0 10px; background: #999; }
.hp { font: 9px Roboto, sans-serif; margin-top: -3px; }
.jt { height: 28px; display: flex; border-bottom: 1px solid #cbcbcf; font-size: 9px; line-height: 15px; padding: 12px 0 0 12px; letter-spacing: .1px; }
.t1 { width: 91px; } .t3 { margin-left: 30px; }
.t2 { width: 66px; color: #3d8ae8; border-bottom: 2px solid #3d8ae8; }
.cols { display: flex; padding-top: 23px; }
.cols h2 { font-size: 8.300px; height: 11px; line-height: 11px; border-bottom: 1px solid #eee; font-weight: 600; letter-spacing: -.18px; color: #42526e; }
.tree { width: 217px; height: 262px; border-right: 1px solid #e6e6ec; }
.find { display: flex; gap: 3px; margin: 6px 0 8px; }
.inp { width: 187px; height: 18px; border: 1px solid #bbb; font: italic 9px/16px Roboto, sans-serif; color: #666; padding-left: 4px; }
.pl { width: 18px; height: 18px; border: 1px solid #ccc; display: grid; place-items: center; }
.row { height: 21.100px; width: 216px; display: flex; align-items: center; font-size: 7.500px; color: #30343f; letter-spacing: -.3px; padding-right: 6px; position: relative; }
.row span { margin-left: 6px; }
.dd { margin-left: auto; }
.pb { width: 62px; height: 5px; background: #a0a0a0; border-radius: 3px; position: absolute; left: 125px; }
.r-a { padding-left: 1px; } .r-b { padding-left: 16px; } .r-c { padding-left: 31px; height: 23px; } .r-d { padding-left: 45px; } .r-e { padding-left: 75px; } .r-f { padding-left: 60px; }
.cy { margin-left: 6px; }
.row .cy + span, .r-f span, .r-e span { margin-left: 2px; }
.exec { flex: 1; padding-left: 4px; }
.exec h2 { margin-left: -4px; padding-left: 9px; }
.exec svg { margin-top: 181px; }
.foot { font-size: 7.300px; padding: 12px 0 0 193px; white-space: nowrap; color: #5e6c84; }
.foot p { display: flex; letter-spacing: -.165px; line-height: 13px; }
.foot i { width: 17px; text-align: center; }
.atl { display: flex; gap: 4px; align-items: center; margin: 20px 0 0 146px; font: 700 11px/12px "Liberation Sans", sans-serif; letter-spacing: .2px; color: #42526e; }
.atl svg { margin-right: 1px; }
.status { position: absolute; left: 0; bottom: 0; width: 428px; height: 14px; line-height: 14px; background: #dfe1e7; border-radius: 0 3px 0 0; font-size: 8.300px; letter-spacing: -.23px; color: #555; padding-left: 3px; white-space: nowrap; }
.scroll { width: 12px; background: #f3f3f5; display: flex; flex-direction: column; align-items: center; padding: 4px 0 3px 1px; }
.scroll i { width: 9px; height: 408px; margin: 3px 0 auto; background: #bdbdc2; }

/* shared taskbar */
.mtask { height: 28px; background: #edd5e3; display: flex; align-items: center; color: #222; position: relative; }
.mstart { width: 33px; padding-left: 11px; }
.msearch { width: 235px; height: 28px; background: #fff; display: flex; align-items: center; padding: 1px 0 0 7px; gap: 10px; font-size: 10px; color: #444; }
.msearch span { letter-spacing: -.09px; }
.mi-c { width: 33.650px; height: 28px; display: grid; place-items: center; position: relative; flex: none; }
.u::after { content: ""; position: absolute; left: 4px; right: 3px; bottom: 0; height: 2px; background: #1177d1; }
.act { background: #faf0f6; }
.dnd { position: absolute; right: 7px; bottom: 5px; width: 7px; height: 7px; border-radius: 50%; border: 2.500px solid #d03045; background: #fff; }
.mtray { display: flex; align-items: center; margin-left: 101px; width: 76px; gap: 7px; }
.mclock { width: 44px; margin-left: 5px; padding-bottom: 2px; font-size: 8px; line-height: 12.500px; text-align: center; letter-spacing: -.22px; white-space: nowrap; }
.mnote { margin-left: 10px; }
.mline { margin-left: auto; width: 2px; height: 28px; background: #f7eaf2; margin-right: 1px; }
.pip { position: absolute; left: 733px; top: 378px; width: 192px; height: 110px; background: #161616; box-shadow: 0 1px 5px #0006; color: #fff; }
.ptop { height: 26px; display: flex; align-items: center; padding-left: 8px; font-size: 8.800px; }
.ptop span { width: 136px; letter-spacing: .06px; }
.ptop b { font-weight: 400; font-size: 7.500px; width: 30px; letter-spacing: -.2px; }
.ptop i { width: 6px; height: 1px; background: #ccc; margin-top: 4px; }
.pava { width: 41px; height: 41px; margin: 2px auto 9px; border-radius: 50%; background: #dce1d8; color: #42502f; font-size: 15px; font-weight: 600; line-height: 41px; text-align: center; }
.pbar { width: 98px; height: 25px; margin: 0 0 0 47px; background: #383838; border-radius: 2px; display: grid; grid-template-columns: repeat(4, 24.500px); }
.pbar div { display: grid; place-items: center; }
.pbar .end { background: #a93543; border-radius: 0 2px 2px 0; }
.hand { position: absolute; left: 280px; top: 301px; }

/* participants */
.strip { height: 94px; margin-top: 3px; display: flex; }
.more { width: 324px; display: flex; padding: 26px 0 0 93px; gap: 42px; }
.av { width: 43px; height: 43px; border-radius: 50%; display: block; text-align: center; line-height: 43px; font-size: 16.500px; font-weight: 600; letter-spacing: -.6px; flex: none; }
.a1 { background: #6264a7; font-size: 13px; width: 42px; height: 42px; line-height: 42px; }
.a2 { background: #edd6e3; color: #6d2f57; }
.a3 { background: #d8e5ea; color: #2f515c; margin-left: -1px; }
.tile { width: 180px; padding-top: 25px; background: #373737; display: flex; flex-direction: column; align-items: center; position: relative; }
.tile .av { width: 44px; height: 44px; line-height: 44px; }
.tile p { align-self: stretch; display: flex; align-items: center; justify-content: space-between; padding: 0 14px 0 15px; margin-top: 5px; height: 17px; font-size: 12px; letter-spacing: -.24px; text-shadow: 0 1px 2px #000; }
.t-cr .av { background: #e8ddda; color: #66483b; }
.t-lg { background: radial-gradient(circle at 50% 50%, #7072b5 20%, #5e5f97 55%, #454566 100%); }
.t-lg .av { background: #e5eddc; color: #4b6b3a; box-shadow: 0 0 0 6px #55577f, 0 0 0 9px #a0a2fc; }
.t-lg p { letter-spacing: -.35px; }
.t-l { background: #323232; }
.t-l .av { background: #dbe2d8; color: #4c6044; }
.tile.t-l p { justify-content: flex-start; gap: 9px; }
.t-om { background: #484644; }
.t-om .av { background: #f8e8cc; color: #80601c; }

/* device settings */
.panel { width: 319px; margin-left: 1px; background: #2d2d2d; padding: 0 20px; }
.ph { display: flex; justify-content: space-between; align-items: center; margin-top: 38px; height: 26px; padding-right: 10px; }
.ph h2 { font-size: 16.500px; font-weight: 700; letter-spacing: -.5px; }
.ph svg { margin-bottom: 3px; }
.lb { display: block; font-size: 13.500px; letter-spacing: -.06px; line-height: 20px; }
.aud { margin-top: 18px; margin-bottom: 9px; }
.sel { height: 32px; background: #1f1f1f; border-radius: 3px; display: flex; align-items: center; justify-content: space-between; padding: 0 8px 0 13px; width: 279px; font-size: 13.500px; font-weight: 700; letter-spacing: -.35px; }
.sel svg { color: #b3b0ad; }
.s1, .s5 { letter-spacing: -.42px; }
.s3 { letter-spacing: -.22px; }
.zone { margin: 16px -20px 0; padding: 16px 20px 0; height: 237px; background: #3b3a38; }
.sm { display: block; font-size: 12px; line-height: 18px; color: #c8c6c4; letter-spacing: -.15px; margin-bottom: 8px; }
.slide { height: 42px; display: flex; align-items: center; padding-left: 4px; }
.track { margin-left: 13px; width: 240px; height: 2px; background: #605e5c; position: relative; display: flex; align-items: center; }
.track i { width: 79px; height: 2px; background: #a6a7dc; }
.track b { width: 10px; height: 10px; margin-left: -5px; border-radius: 50%; background: #b3b0ad; }
.mf { margin-top: 10px; letter-spacing: -.3px; }
.meter { height: 42px; display: flex; align-items: center; padding-left: 4px; }
.pills { margin-left: 12px; display: flex; gap: 8px; }
.pills i { width: 6px; height: 16px; border-radius: 3px; background: #605e5c; }
.noise { display: flex; align-items: center; gap: 8px; margin-top: 16px; height: 20px; letter-spacing: -.15px; }
.desc { font-size: 12px; line-height: 17px; color: #c8c6c4; margin-top: 1px; white-space: nowrap; letter-spacing: -.34px; }
.more-l { display: block; color: #a6a7dc; font-size: 12px; line-height: 17px; margin: 4px 0 4px; letter-spacing: -.38px; }
.camr { margin: 16px 0 9px; }

/* taskbar */
.taskbar { height: 40px; margin-top: 2px; display: flex; align-items: center; background: linear-gradient(90deg, #1c1c1c 0, #1c1c1c 845px, #424242 905px, #4b4b4b 1366px); }
.start { width: 48px; padding-left: 16px; }
.search { width: 344px; height: 40px; background: #f2f2f2; border: 1px solid #bbb; border-width: 1px 0; display: flex; align-items: center; gap: 12px; padding-left: 11px; color: #333; font-size: 14.500px; }
.search span { letter-spacing: -.07px; }
.app { width: 49px; height: 40px; display: grid; place-items: center; position: relative; flex: none; border: solid transparent; border-width: 0 4px; }
.app::after { content: ""; position: absolute; left: 0; right: 0; bottom: 0; height: 2px; background: #76b9ed; }
.w48 { width: 48px; } .w48::after { display: none; }
.pp { margin-left: 2px; margin-right: 1px; }
.tm { width: 45px; background: #474747; border: 0; }
.rec { position: absolute; right: 8px; bottom: 7px; width: 11px; height: 11px; border-radius: 50%; background: #c50f1f; border: 1px solid #fff; }
.tsep { width: 3px; height: 40px; background: #333; border-left: 1px solid #555; }
.spin { margin-left: auto; width: 17px; height: 40px; background: #f0f0f0; display: flex; flex-direction: column; justify-content: space-between; align-items: center; padding: 7px 0 6px; }
.tray { width: 279px; display: flex; align-items: center; height: 40px; color: #fff; }
.ty1 { margin-left: 6px; } .ty2 { margin-left: 9px; } .ty3 { margin-left: 7px; } .ty4 { margin-left: 9px; } .ty5 { margin-left: 6px; }
.por { margin-left: 9px; width: 24px; font-size: 12px; letter-spacing: -.4px; }
.clock { width: 60px; margin-left: 11px; font-size: 12px; line-height: 18px; text-align: center; letter-spacing: -.45px; }
.note { margin-left: 18px; position: relative; width: 17px; }
.note b { position: absolute; left: 6px; top: 7px; width: 19px; height: 16px; border-radius: 8px; background: #444; border: 1px solid #999; font-size: 11px; line-height: 14px; text-align: center; font-weight: 600; letter-spacing: -.4px; }
.desk { width: 1px; height: 40px; margin-left: auto; margin-right: 3px; background: #777; }
```
